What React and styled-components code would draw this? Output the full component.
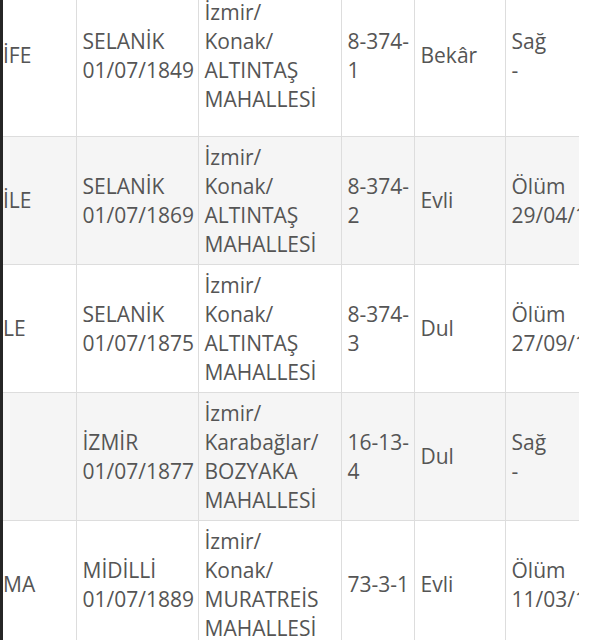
import React from "react";
import styled, { createGlobalStyle } from "styled-components";

const GlobalStyle = createGlobalStyle`
  html, body {
    margin: 0;
    padding: 0;
    background: #ffffff;
    overflow: hidden;
  }
  body {
    font-family: "Open Sans", "Noto Sans", "DejaVu Sans", sans-serif;
  }
`;

const Frame = styled.div`
  height: 640px;
  border-left: 3px solid #262626;
  overflow: hidden;
`;

const Clip = styled.div`
  width: 576px;
  overflow: hidden;
  margin-top: -26px;
`;

const Table = styled.table`
  border-collapse: collapse;
  table-layout: fixed;
  width: 602px;
  color: #555555;
  font-size: 21px;
  line-height: 29px;
`;

const Row = styled.tr`
  height: ${props => props.tall ? "162px" : "128px"};
  background: ${props => props.striped ? "#f5f5f5" : "#ffffff"};
  border-top: 1px solid #dddddd;
`;

const Cell = styled.td`
  vertical-align: middle;
  padding: 0 2px 0 ${props => props.first ? "0" : "6px"};
  border-left: ${props => props.first ? "none" : "1px solid #dddddd"};
  white-space: nowrap;
  overflow: hidden;
`;

const Line = styled.div`
  display: block;
`;

const widths = [73, 122, 143, 73, 91, 100];

const rows = [
  [["İFE"], ["SELANİK", "01/07/1849"], ["İzmir/", "Konak/", "ALTINTAŞ", "MAHALLESİ"], ["8-374-", "1"], ["Bekâr"], ["Sağ", "-"]],
  [["İLE"], ["SELANİK", "01/07/1869"], ["İzmir/", "Konak/", "ALTINTAŞ", "MAHALLESİ"], ["8-374-", "2"], ["Evli"], ["Ölüm", "29/04/1"]],
  [["LE"], ["SELANİK", "01/07/1875"], ["İzmir/", "Konak/", "ALTINTAŞ", "MAHALLESİ"], ["8-374-", "3"], ["Dul"], ["Ölüm", "27/09/1"]],
  [[""], ["İZMİR", "01/07/1877"], ["İzmir/", "Karabağlar/", "BOZYAKA", "MAHALLESİ"], ["16-13-", "4"], ["Dul"], ["Sağ", "-"]],
  [["MA"], ["MİDİLLİ", "01/07/1889"], ["İzmir/", "Konak/", "MURATREİS", "MAHALLESİ"], ["73-3-1"], ["Evli"], ["Ölüm", "11/03/1"]],
];

export default function App() {
  return (
    <>
      <GlobalStyle />
      <Frame>
        <Clip>
          <Table>
            <colgroup>
              {widths.map((w, i) => <col key={i} style={{ width: w }} />)}
            </colgroup>
            <tbody>
              {rows.map((row, r) => (
                <Row key={r} tall={r === 0} striped={r % 2 === 1}>
                  {row.map((lines, c) => (
                    <Cell key={c} first={c === 0}>
                      {lines.map((t, i) => <Line key={i}>{t}</Line>)}
                    </Cell>
                  ))}
                </Row>
              ))}
            </tbody>
          </Table>
        </Clip>
      </Frame>
    </>
  );
}
